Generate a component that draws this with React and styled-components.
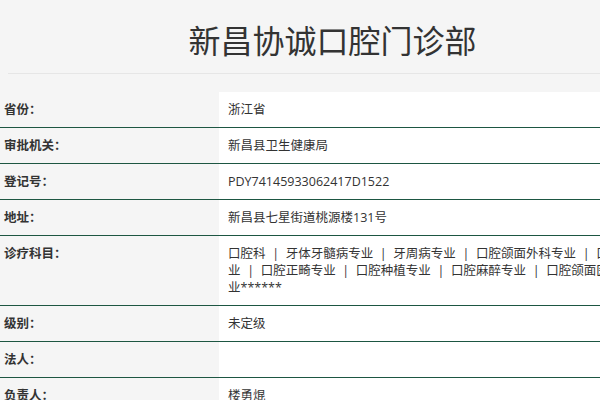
import React from 'react'
import styled, { createGlobalStyle } from 'styled-components'

const GlobalStyle = createGlobalStyle`
  * {
    margin: 0;
    padding: 0;
    box-sizing: border-box;
  }
  body {
    background: #f5f5f5;
    font-family: 'Open Sans', 'Noto Sans CJK SC', sans-serif;
    color: #333;
    overflow: hidden;
  }
`

const rows = [
  { label: '省份：', value: '浙江省' },
  { label: '审批机关：', value: '新昌县卫生健康局' },
  { label: '登记号：', value: 'PDY74145933062417D1522' },
  { label: '地址：', value: '新昌县七星街道桃源楼131号' },
  {
    label: '诊疗科目：',
    value:
      '口腔科 | 牙体牙髓病专业 | 牙周病专业 | 口腔颌面外科专业 | 口腔修复专业 | 口腔正畸专业 | 口腔种植专业 | 口腔麻醉专业 | 口腔颌面医学影像专业******',
  },
  { label: '级别：', value: '未定级' },
  { label: '法人：', value: '' },
  { label: '负责人：', value: '楼勇焜' },
]

function App() {
  return (
    <Page>
      <GlobalStyle />
      <Header>
        <Title>新昌协诚口腔门诊部</Title>
      </Header>
      <InfoTable>
        {rows.map((row) => (
          <Row key={row.label}>
            <Label>{row.label}</Label>
            <Value>{row.value}</Value>
          </Row>
        ))}
      </InfoTable>
    </Page>
  )
}

const Page = styled.div`
  width: 670px;
  background: #f5f5f5;
`

const Header = styled.header`
  display: flex;
  justify-content: center;
  align-items: center;
  height: 74px;
  margin: 0 0 0 8px;
  padding-right: 13px;
  border-bottom: 1px solid #e6e6e6;
`

const Title = styled.h1`
  font-family: 'Noto Sans CJK SC', sans-serif;
  font-size: 32px;
  font-weight: 400;
  color: #333;
  line-height: 40px;
  margin-top: 4px;
`

const InfoTable = styled.div`
  margin-top: 18px;
  display: flex;
  flex-direction: column;
`

const Row = styled.div`
  display: grid;
  grid-template-columns: 219px 1fr;
  border-bottom: 1px solid #1d5642;
`

const Label = styled.div`
  padding: 9px 4px;
  font-size: 12.5px;
  line-height: 17px;
  font-weight: 700;
  color: #333;
  background: #f5f5f5;
`

const Value = styled.div`
  padding: 9px 8px 9px 9px;
  font-size: 12.5px;
  line-height: 17px;
  word-spacing: 3.4px;
  color: #333;
  background: #fff;
  min-height: 35px;
`

export default App
